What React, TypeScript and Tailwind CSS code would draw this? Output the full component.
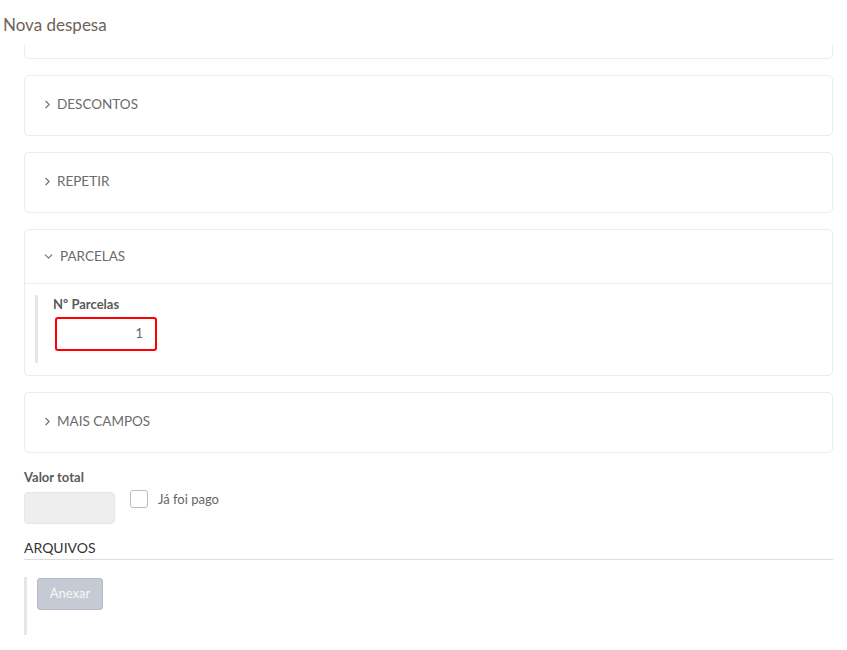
import React from "react";
import { ChevronRight, ChevronDown } from "lucide-react";

function Section({ title, open, children }: { title: string; open?: boolean; children?: React.ReactNode }) {
  return (
    <div className="border border-[#ececf0] rounded-[5px] bg-white">
      <div
        className={`flex items-center gap-[3px] pl-[16px] text-[13.5px] text-[#6b6b6b] ${
          open ? "h-[54px] border-b border-[#ececf0]" : "h-[59px] pb-[3px]"
        }`}
      >
        {open ? (
          <ChevronDown size={13} strokeWidth={2.2} className="text-[#777] ml-[1px]" />
        ) : (
          <ChevronRight size={13} strokeWidth={2.2} className="text-[#777]" />
        )}
        <span className={open ? "ml-[2px]" : ""}>{title}</span>
      </div>
      {children}
    </div>
  );
}

export default function App() {
  return (
    <div className="w-[847px] h-[650px] bg-white overflow-hidden font-['Lato','Liberation_Sans',sans-serif]">
      <div className="h-[45px] pl-[3px] pt-[14px] text-[17px] text-[#6e6259] leading-[22px]">Nova despesa</div>
      <div className="pl-[24px] pr-[14px]">
        <div className="h-[14px] border-x border-b border-[#ececf0] rounded-b-[5px]" />
        <div className="mt-[16px] flex flex-col gap-[16px]">
          <Section title="DESCONTOS" />
          <Section title="REPETIR" />
          <Section title="PARCELAS" open>
            <div className="pl-[10px] pt-[11px] pb-[12px]">
              <div className="border-l-[3px] border-[#e6e6e6] pl-[15px] h-[68px]">
                <div className="text-[13px] font-bold text-[#5a5a5a] leading-[16px] pt-[1px]">Nº Parcelas</div>
                <div className="mt-[5px] ml-[2px] w-[102px] h-[34px] border-2 border-[#ff0000] rounded-[3px] flex items-center justify-end pr-[12px] text-[13px] text-[#666]">
                  1
                </div>
              </div>
            </div>
          </Section>
          <Section title="MAIS CAMPOS" />
        </div>
        <div className="mt-[16px] text-[13px] font-bold text-[#5a5a5a] leading-[16px]">Valor total</div>
        <div className="mt-[7px] flex items-start">
          <div className="w-[91px] h-[32px] bg-[#eeeeee] border border-[#e6e6e6] rounded-[4px]" />
          <div className="ml-[15px] -mt-[2px] w-[18px] h-[18px] border border-[#bdbdbd] rounded-[3px] bg-white" />
          <div className="ml-[10px] text-[13px] text-[#666] leading-[16px] -mt-[1px]">Já foi pago</div>
        </div>
        <div className="mt-[15px] text-[14px] text-[#333] leading-[18px] pb-[2px] border-b border-[#dddddd]">ARQUIVOS</div>
        <div className="mt-[17px] border-l-[3px] border-[#e6e6e6] h-[58px] pl-[10px] pt-[1px]">
          <div className="w-[66px] h-[32px] bg-[#c6cad4] border border-[#b8bcc8] rounded-[3px] flex items-center justify-center text-[13px] text-[#f7f8fa]">
            Anexar
          </div>
        </div>
      </div>
    </div>
  );
}
